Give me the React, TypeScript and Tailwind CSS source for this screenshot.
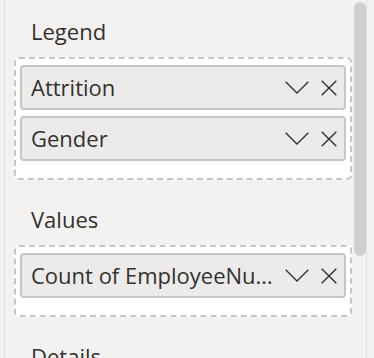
import React from 'react';

const Chevron = () => (
  <svg width="24" height="13" viewBox="0 0 24 13" fill="none" className="shrink-0">
    <polyline points="0.7,0.7 12,12 23.3,0.7" stroke="#323130" strokeWidth="1.3" />
  </svg>
);

const Close = () => (
  <svg width="16" height="16" viewBox="0 0 16 16" fill="none" className="shrink-0">
    <path d="M0.7 0.7 L15.3 15.3 M15.3 0.7 L0.7 15.3" stroke="#323130" strokeWidth="1.4" />
  </svg>
);

const FieldItem = ({ label }: { label: string }) => (
  <div className="flex items-center h-[45px] rounded-[4px] border-2 border-[#c8c6c4] bg-[#edebe9] pl-[9px] pr-[7px]">
    <span className="flex-1 min-w-0 truncate">{label}</span>
    <div className="flex items-center gap-[12px] ml-[4px]">
      <Chevron />
      <Close />
    </div>
  </div>
);

const Well = ({ title, items, first }: { title: string; items: string[]; first?: boolean }) => (
  <div className={first ? '' : 'mt-[25px]'}>
    <div className="h-[28px] leading-[28px] pl-[17px] mb-[12px]">{title}</div>
    <div className="flex flex-col gap-[6px] rounded-[5px] border-2 border-dashed border-[#c8c6c4] bg-white pt-[6px] pb-[17px] px-[4px]">
      {items.map((it) => (
        <FieldItem key={it} label={it} />
      ))}
    </div>
  </div>
);

export default function App() {
  return (
    <div
      className="flex w-[374px] h-[358px] overflow-hidden bg-[#f3f2f1] text-[#323130] text-[22px]"
      style={{ fontFamily: '"Open Sans", "Noto Sans", sans-serif' }}
    >
      <div className="w-[4px] shrink-0" />
      <div className="w-px shrink-0 bg-[#e1dfdd]" />
      <div className="flex-1 min-w-0 pl-[9px] pr-[2px] pt-[17px]">
        <Well first title="Legend" items={['Attrition', 'Gender']} />
        <Well title="Values" items={['Count of EmployeeNumber']} />
        <div className="mt-[25px] h-[28px] leading-[28px] pl-[17px]">Details</div>
      </div>
      <div className="w-[12px] shrink-0 pt-[2px]">
        <div className="h-[254px] rounded-t-[6px] rounded-b-[6px] bg-[#d2d0ce]" />
      </div>
      <div className="w-px shrink-0 bg-[#e1dfdd]" />
      <div className="w-[7px] shrink-0" />
    </div>
  );
}
